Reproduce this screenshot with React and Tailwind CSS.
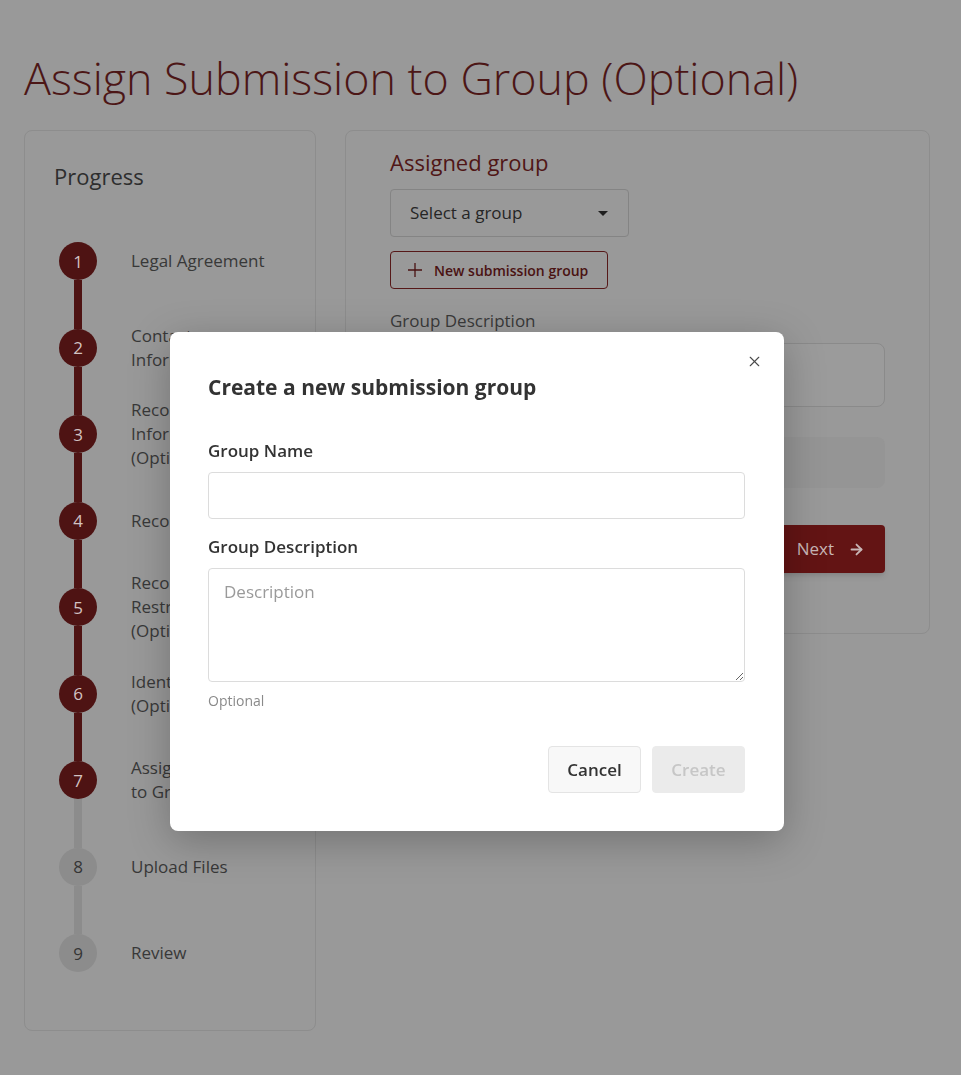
import React from "react";
import { ArrowRight, X } from "lucide-react";

const steps = [
  { n: 1, label: "Legal Agreement" },
  { n: 2, label: "Contact Information" },
  { n: 3, label: "Recording Information (Optional)" },
  { n: 4, label: "Recordings" },
  { n: 5, label: "Recording Restrictions (Optional)" },
  { n: 6, label: "Identifiers (Optional)" },
  { n: 7, label: "Assign Submission to Group" },
  { n: 8, label: "Upload Files" },
  { n: 9, label: "Review" },
];

const CURRENT = 7;

function Step({ n, label }) {
  const done = n <= CURRENT;
  const topColor = n === 1 ? "bg-transparent" : n <= CURRENT ? "bg-[#4e1313]" : "bg-[#8c8c8c]";
  const bottomColor = n === 9 ? "bg-transparent" : n + 1 <= CURRENT ? "bg-[#4e1313]" : "bg-[#8c8c8c]";
  return (
    <div className="flex h-[86.5px] items-stretch">
      <div className="flex w-[38px] flex-col items-center">
        <div className={`w-[8px] flex-1 ${topColor}`} />
        <div
          className={`flex h-[38px] w-[38px] items-center justify-center rounded-full text-[17px] ${
            done ? "bg-[#4e1313] text-[#d2c2c2]" : "bg-[#8c8c8c] text-[#353535]"
          }`}
        >
          {n}
        </div>
        <div className={`w-[8px] flex-1 ${bottomColor}`} />
      </div>
      <div className="ml-[34px] flex w-[152px] items-center text-[17px] leading-[24px] text-[#383838]">
        {label}
      </div>
    </div>
  );
}

export default function App() {
  return (
    <div
      className="min-h-[1075px] bg-[#999999] px-6 pt-[50px]"
      style={{ fontFamily: '"Open Sans", "Liberation Sans", sans-serif' }}
    >
      <h1 className="text-[44.8px] font-light leading-[55px] text-[#4c1616]">
        Assign Submission to Group (Optional)
      </h1>
      <div className="mt-[25px] flex items-start gap-[29px]">
        {/* Progress card */}
        <div className="w-[292px] rounded-lg border border-[#8d8d8d] pt-[30px] pr-[29px] pb-[33px] pl-[29px]">
          <h2 className="text-[22px] leading-[30px] text-[#2e2e2e]">Progress</h2>
          <div className="mt-[27px] pl-[5px]">
            {steps.map((s) => (
              <Step key={s.n} {...s} />
            ))}
          </div>
        </div>

        {/* Main card */}
        <div className="w-[585px] rounded-lg border border-[#8d8d8d] px-[44px] pt-[16px] pb-[60px]">
          <h2 className="text-[22px] leading-[30px] text-[#501616]">Assigned group</h2>
          <div className="mt-[12px] flex h-[48px] w-[239px] items-center justify-between rounded border border-[#848484] pr-[20px] pl-[19px] text-[17px] text-[#262626]">
            <span>Select a group</span>
            <svg width="10" height="5" viewBox="0 0 10 5">
              <path d="M0 0h10L5 5z" fill="#1e1e1e" />
            </svg>
          </div>
          <button className="mt-[14px] flex h-[38px] w-[218px] items-center gap-[12px] rounded border border-[#561818] pl-[17px] text-[14px] font-semibold text-[#4a1212]">
            <svg width="14" height="14" viewBox="0 0 14 14">
              <path d="M7 0v14M0 7h14" stroke="#4a1212" strokeWidth="1.3" />
            </svg>
            New submission group
          </button>
          <div className="mt-[20px] text-[17px] leading-[24px] text-[#3a3a3a]">Group Description</div>
          <div className="mt-[10px] h-[64px] rounded-lg border border-[#8a8a8a] bg-[#9b9b9b]" />
          <div className="mt-[30px] h-[51px] rounded-lg bg-[#959595]" />
          <div className="mt-[37px] flex justify-end">
            <button className="flex h-[48px] w-[110px] items-center justify-end gap-[14px] rounded bg-[#631414] pr-[20px] text-[17px] text-[#c8b6b6] shadow-md">
              Next
              <ArrowRight size={17} strokeWidth={2.6} />
            </button>
          </div>
        </div>
      </div>

      {/* Dialog */}
      <div className="fixed inset-0">
        <div className="absolute top-[332px] left-[170px] w-[614px] rounded-lg bg-white pt-[41px] pr-[39px] pb-[38px] pl-[38px] shadow-[0_10px_40px_rgba(0,0,0,0.25)]">
          <button className="absolute top-[21px] right-[21px] text-[#4a4a4a]">
            <X size={17} strokeWidth={1.6} />
          </button>
          <h3 className="text-[21px] leading-[28px] font-bold text-[#333333]">Create a new submission group</h3>
          <label className="mt-[38px] block text-[17px] leading-[24px] font-semibold text-[#333333]">Group Name</label>
          <input className="mt-[9px] block h-[47px] w-full rounded border border-[#dcdcdc] px-4 text-[17px] outline-none" />
          <label className="mt-[16px] block text-[17px] leading-[24px] font-semibold text-[#333333]">
            Group Description
          </label>
          <textarea
            placeholder="Description"
            className="mt-[9px] block h-[114px] w-full rounded border border-[#dcdcdc] px-[15px] py-[11px] text-[17px] leading-[24px] outline-none placeholder:text-[#9a9a9a]"
          />
          <div className="mt-[9px] text-[14px] leading-[20px] text-[#8a8a8a]">Optional</div>
          <div className="mt-[35px] flex justify-end gap-[11px]">
            <button className="h-[47px] w-[93px] rounded border border-[#e4e4e4] bg-[#f8f8f8] text-[17px] font-semibold text-[#333333]">
              Cancel
            </button>
            <button className="h-[47px] w-[93px] rounded border border-[#ebebeb] bg-[#ebebeb] text-[17px] font-semibold text-[#c6c6c6]">
              Create
            </button>
          </div>
        </div>
      </div>
    </div>
  );
}
